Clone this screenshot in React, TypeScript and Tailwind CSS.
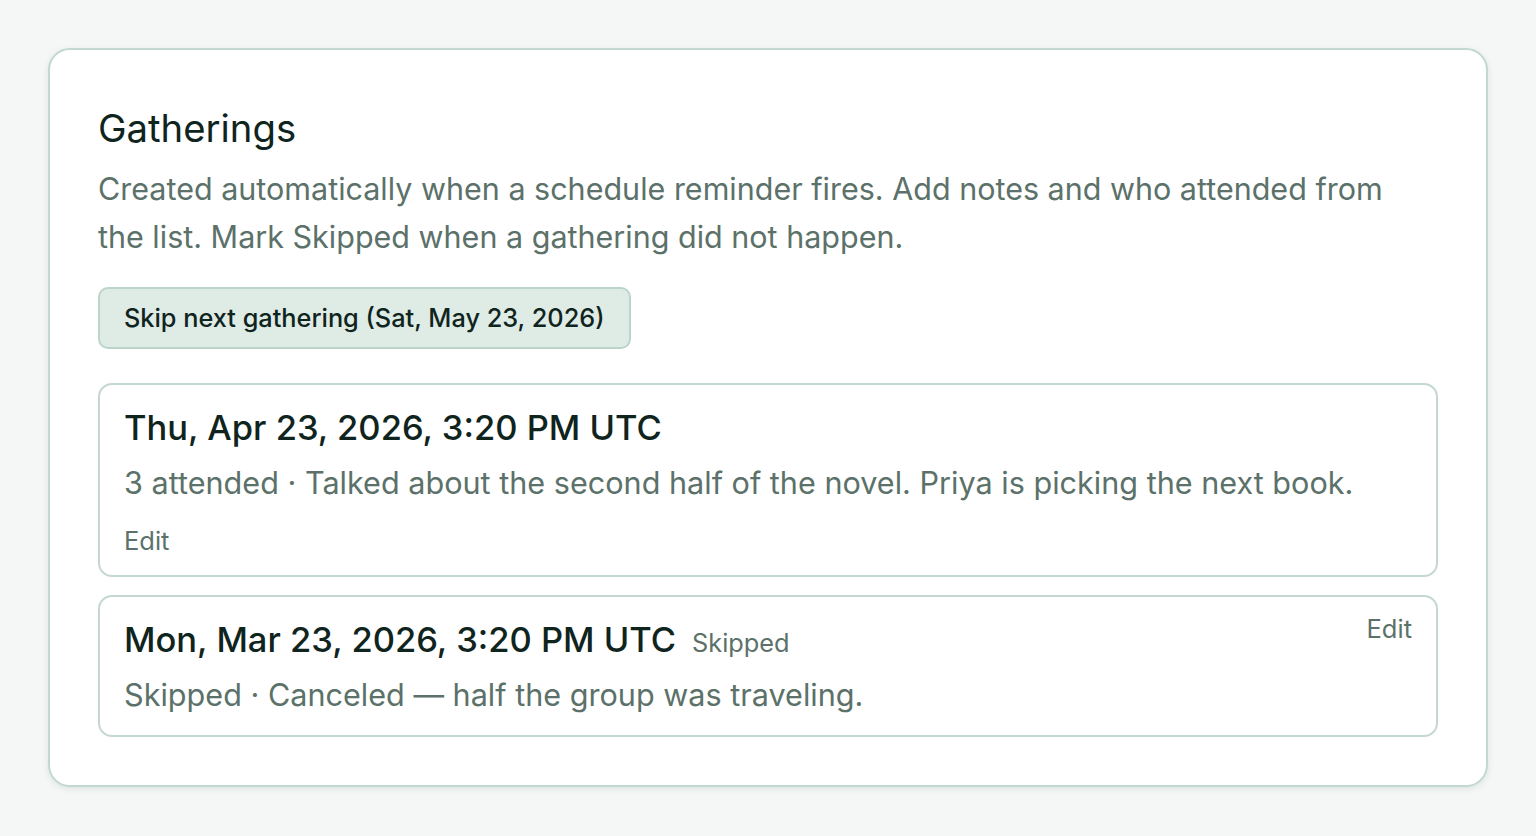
const gatherings = [
  {
    id: "1",
    when: "Thu, Apr 23, 2026, 3:20 PM UTC",
    skipped: false,
    summary: "3 attended · Talked about the second half of the novel. Priya is picking the next book.",
  },
  {
    id: "2",
    when: "Mon, Mar 23, 2026, 3:20 PM UTC",
    skipped: true,
    summary: "Skipped · Canceled — half the group was traveling.",
  },
];

const GatheringCard = ({ g }: { g: (typeof gatherings)[number] }) => {
  if (g.skipped) {
    return (
      <div className="border-2 border-[#c3d8d0] rounded-[14px] px-6 pt-[21px] pb-[16px] flex justify-between items-start">
        <div>
          <div className="flex items-baseline gap-4">
            <h3 className="text-[34.5px] leading-[44px] font-medium text-[#10241e]">{g.when}</h3>
            <span className="text-[25.3px] text-[#5b7169]">Skipped</span>
          </div>
          <p className="text-[30.6px] leading-[48px] text-[#5b7169] mt-[9px]">{g.summary}</p>
        </div>
        <button className="text-[25.5px] leading-[36px] text-[#5b7169] mt-[-7px]">Edit</button>
      </div>
    );
  }
  return (
    <div className="border-2 border-[#c3d8d0] rounded-[14px] px-6 pt-[21px] pb-[16px]">
      <h3 className="text-[34.5px] leading-[44px] font-medium text-[#10241e]">{g.when}</h3>
      <p className="text-[30.6px] leading-[48px] text-[#5b7169] mt-[9px]">{g.summary}</p>
      <button className="block text-[25.5px] leading-[36px] text-[#5b7169] mt-[16px]">Edit</button>
    </div>
  );
};

export default function App() {
  return (
    <div className="min-h-screen bg-[#f4f7f6] px-[48px] pt-[48px] font-['Inter',sans-serif]">
      <div className="bg-white border-2 border-[#c3d8d0] rounded-[22px] shadow-[0_2px_6px_rgba(60,90,80,0.12)] px-12 pt-[54px] pb-[48px]">
        <h2 className="text-[38.3px] leading-[48px] text-[#10241e]">Gatherings</h2>
        <p className="text-[30.5px] leading-[48px] text-[#5b7169] mt-[13px] max-w-[1310px]">
          Created automatically when a schedule reminder fires. Add notes and who attended from the list. Mark Skipped when a gathering did not happen.
        </p>
        <button className="block mt-[26px] bg-[#dfebe5] border-2 border-[#bcd5cb] rounded-[10px] px-6 h-[62px] text-[25.3px] font-medium text-[#10241e]">
          Skip next gathering (Sat, May 23, 2026)
        </button>
        <div className="flex flex-col gap-[18px] mt-[34px]">
          {gatherings.map((g) => (
            <GatheringCard key={g.id} g={g} />
          ))}
        </div>
      </div>
    </div>
  );
}
